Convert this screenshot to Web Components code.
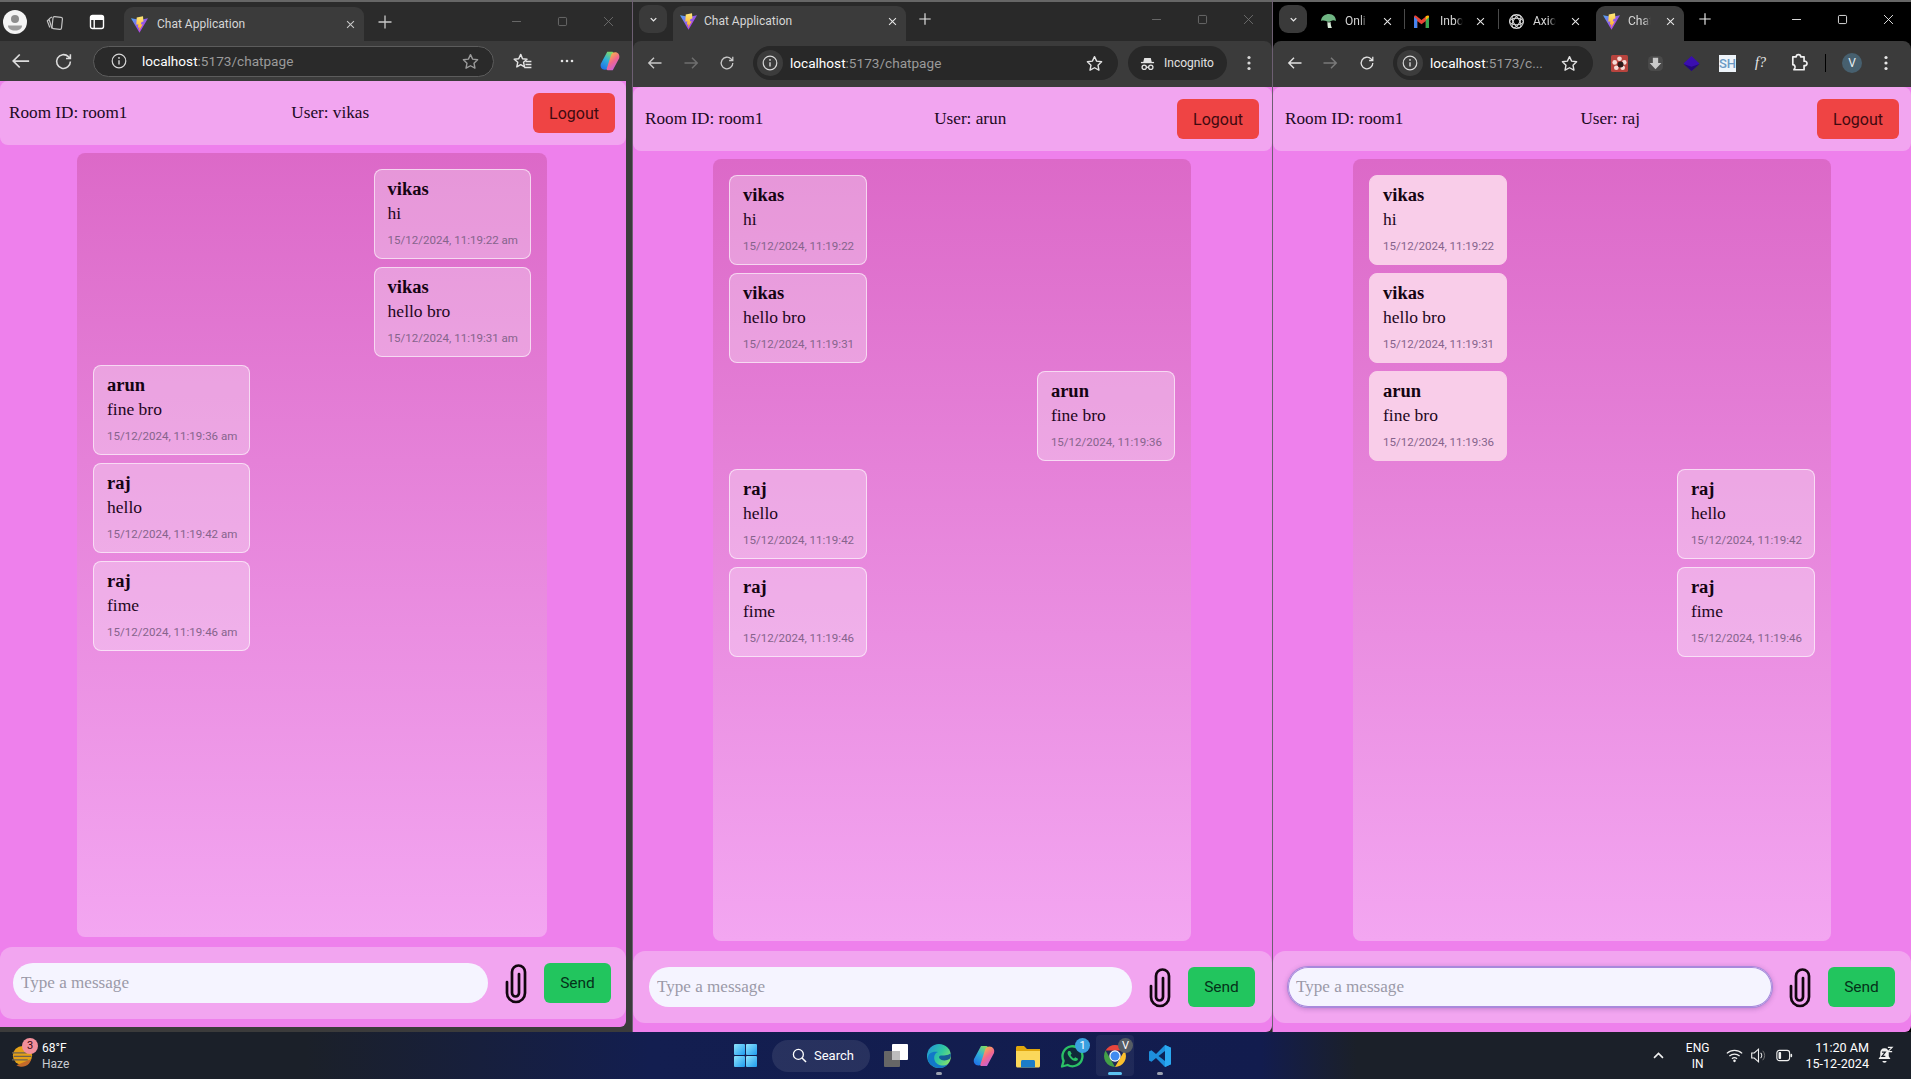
<!DOCTYPE html>
<html lang="en">
<head>
<meta charset="UTF-8">
<title>Chat Application</title>
<style>
  html, body { margin: 0; height: 100%; background: #000; overflow: hidden; }
</style>
</head>
<body>
<desk-top>
  <!-- first window: edge -->
  <browser-window kind="edge">
    <ui-icon slot="tabs" name="avatar" size="24" style="margin-left:3px"></ui-icon>
    <ui-icon slot="tabs" name="workspace" size="18" style="margin-left:19px;color:#c4c4c4"></ui-icon>
    <ui-icon slot="tabs" name="tabview" size="16" style="margin-left:25px;color:#fff"></ui-icon>
    <win-tab slot="tabs" active label="Chat Application" style="margin-left:19px;width:240px;--tab-h:34px;--tab-bg:#3b3b3b;--close:#c9c9c9;--tt:9px"></win-tab>
    <ui-icon slot="tabs" name="plus" size="16" style="margin-left:13px;color:#c9c9c9"></ui-icon>
    <win-controls slot="tabs" style="color:#6f6f6f;margin-left:auto;margin-right:1px"></win-controls>

    <ui-icon slot="tools" name="back" size="20" style="margin-left:11px;color:#dcdcdc"></ui-icon>
    <ui-icon slot="tools" name="reload" size="19" style="margin-left:23px;color:#dcdcdc"></ui-icon>
    <address-box slot="tools" host="localhost" rest=":5173/chatpage" style="margin-left:20px;width:401px;--addr-h:31px;--addr-bg:#2a2a2a;--addr-line:#5c5c5c;--star:#9b9b9b;--info-bg:transparent;--i-ml:9px;--u-ml:10px"></address-box>
    <ui-icon slot="tools" name="favs" size="19" style="margin-left:19px;color:#e4e4e4"></ui-icon>
    <ui-icon slot="tools" name="dots" size="16" style="margin-left:27px;color:#e4e4e4"></ui-icon>
    <ui-icon slot="tools" name="copilot" size="22" style="margin-left:24px"></ui-icon>

    <chat-page room="room1" user="vikas" style="--box-w:470px;--box-l:77px;--head-l:9px;--head-r:11px;--bar-l:13px;--bar-r:15px;--end:8px">
      <chat-bubble side="right"><span slot="name">vikas</span>hi<span slot="time">15/12/2024, 11:19:22 am</span></chat-bubble>
      <chat-bubble side="right"><span slot="name">vikas</span>hello bro<span slot="time">15/12/2024, 11:19:31 am</span></chat-bubble>
      <chat-bubble><span slot="name">arun</span>fine bro<span slot="time">15/12/2024, 11:19:36 am</span></chat-bubble>
      <chat-bubble><span slot="name">raj</span>hello<span slot="time">15/12/2024, 11:19:42 am</span></chat-bubble>
      <chat-bubble><span slot="name">raj</span>fime<span slot="time">15/12/2024, 11:19:46 am</span></chat-bubble>
    </chat-page>
  </browser-window>

  <!-- second window: chrome incognito -->
  <browser-window kind="chrome" style="--strip:#292929">
    <tab-search slot="tabs" style="margin-left:6px"></tab-search>
    <win-tab slot="tabs" active label="Chat Application" style="margin-left:6px;width:233px;--tab-h:35px;--tab-bg:#3b3b3b;--close:#e8e8e8;--tt:7px;--tab-low:5px"></win-tab>
    <ui-icon slot="tabs" name="plus" size="14" style="margin-left:12px;color:#e8e8e8"></ui-icon>
    <win-controls slot="tabs" style="color:#6f6f6f;margin-left:auto;margin-right:1px"></win-controls>

    <ui-icon slot="tools" name="back" size="16" style="margin-left:14px;color:#c9c9c9"></ui-icon>
    <ui-icon slot="tools" name="forward" size="16" style="margin-left:20px;color:#6f6f6f"></ui-icon>
    <ui-icon slot="tools" name="reload" size="16" style="margin-left:20px;color:#c9c9c9"></ui-icon>
    <address-box slot="tools" host="localhost" rest=":5173/chatpage" style="margin-left:18px;width:365px;--addr-h:34px;--addr-bg:#282828;--addr-line:#282828;--star:#e2e2e2;--info-bg:#3c3c3c"></address-box>
    <incognito-pill slot="tools" style="margin-left:10px"></incognito-pill>
    <ui-icon slot="tools" name="kebab" size="16" style="margin-left:14px;color:#d8d8d8"></ui-icon>

    <chat-page room="room1" user="arun" style="--box-w:478px;--box-l:80px;--head-l:12px;--head-r:13px;--bar-l:16px;--bar-r:17px;--end:9px">
      <chat-bubble><span slot="name">vikas</span>hi<span slot="time">15/12/2024, 11:19:22</span></chat-bubble>
      <chat-bubble><span slot="name">vikas</span>hello bro<span slot="time">15/12/2024, 11:19:31</span></chat-bubble>
      <chat-bubble side="right"><span slot="name">arun</span>fine bro<span slot="time">15/12/2024, 11:19:36</span></chat-bubble>
      <chat-bubble><span slot="name">raj</span>hello<span slot="time">15/12/2024, 11:19:42</span></chat-bubble>
      <chat-bubble><span slot="name">raj</span>fime<span slot="time">15/12/2024, 11:19:46</span></chat-bubble>
    </chat-page>
  </browser-window>

  <!-- third window: chrome, own profile -->
  <browser-window kind="chrome" style="--strip:#000">
    <tab-search slot="tabs" style="margin-left:6px"></tab-search>
    <win-tab slot="tabs" clipped label="Onli" icon="mushroom" style="margin-left:6px;width:88px;--tab-h:35px;--tab-bg:transparent;--close:#e8e8e8;--tab-low:5px"></win-tab>
    <i slot="tabs" style="width:1px;height:20px;margin-left:3px;background:#4a4a4a"></i>
    <win-tab slot="tabs" clipped label="Inbo" icon="gmail" style="margin-left:1px;width:88px;--tab-h:35px;--tab-bg:transparent;--close:#e8e8e8;--tab-low:5px;--tt:10px"></win-tab>
    <i slot="tabs" style="width:1px;height:20px;margin-left:4px;background:#4a4a4a"></i>
    <win-tab slot="tabs" clipped label="Axio" icon="openai" style="margin-left:2px;width:88px;--tab-h:35px;--tab-bg:transparent;--close:#e8e8e8;--tab-low:5px"></win-tab>
    <win-tab slot="tabs" clipped active label="Chat" style="margin-left:7px;width:88px;--tab-h:35px;--tab-bg:#3b3b3b;--close:#e8e8e8;--tab-low:5px"></win-tab>
    <ui-icon slot="tabs" name="plus" size="14" style="margin-left:14px;color:#f0f0f0"></ui-icon>
    <win-controls slot="tabs" style="color:#f0f0f0;margin-left:auto;margin-right:0"></win-controls>

    <ui-icon slot="tools" name="back" size="16" style="margin-left:14px;color:#e2e2e2"></ui-icon>
    <ui-icon slot="tools" name="forward" size="16" style="margin-left:19px;color:#7a7a7a"></ui-icon>
    <ui-icon slot="tools" name="reload" size="16" style="margin-left:21px;color:#e2e2e2"></ui-icon>
    <address-box slot="tools" host="localhost" rest=":5173/c..." style="margin-left:18px;width:200px;--addr-h:34px;--addr-bg:#282828;--addr-line:#282828;--star:#e2e2e2;--info-bg:#3c3c3c"></address-box>
    <ui-icon slot="tools" name="ext-red" size="17" style="margin-left:18px"></ui-icon>
    <ui-icon slot="tools" name="ext-grey" size="17" style="margin-left:19px"></ui-icon>
    <ui-icon slot="tools" name="ext-purple" size="17" style="margin-left:19px"></ui-icon>
    <ext-text slot="tools" style="margin-left:19px;background:#eef4fa;color:#6a9ac4;font:500 13px Roboto,sans-serif">SH</ext-text>
    <ext-text slot="tools" style="margin-left:16px;color:#eee;font:italic 14px 'Liberation Serif',serif">f?</ext-text>
    <ui-icon slot="tools" name="puzzle" size="18" style="margin-left:21px;color:#f0f0f0"></ui-icon>
    <i slot="tools" style="width:1px;height:18px;background:#000;margin-left:17px"></i>
    <profile-dot slot="tools" style="margin-left:16px"></profile-dot>
    <ui-icon slot="tools" name="kebab" size="16" style="margin-left:16px;color:#e8e8e8"></ui-icon>

    <chat-page room="room1" user="raj" focused style="--box-w:478px;--box-l:80px;--head-l:12px;--head-r:12px;--bar-l:15px;--bar-r:16px;--end:9px">
      <chat-bubble solid><span slot="name">vikas</span>hi<span slot="time">15/12/2024, 11:19:22</span></chat-bubble>
      <chat-bubble solid><span slot="name">vikas</span>hello bro<span slot="time">15/12/2024, 11:19:31</span></chat-bubble>
      <chat-bubble solid><span slot="name">arun</span>fine bro<span slot="time">15/12/2024, 11:19:36</span></chat-bubble>
      <chat-bubble side="right"><span slot="name">raj</span>hello<span slot="time">15/12/2024, 11:19:42</span></chat-bubble>
      <chat-bubble side="right"><span slot="name">raj</span>fime<span slot="time">15/12/2024, 11:19:46</span></chat-bubble>
    </chat-page>
  </browser-window>

  <task-bar></task-bar>
</desk-top>

<script>
  // all icons are hand drawn, fill and stroke are set per icon
  const VITE = `<defs><linearGradient id="vp" x1="0" y1="0" x2="1" y2="1"><stop offset="0" stop-color="#4fa8f5"/><stop offset=".6" stop-color="#a04be8"/><stop offset="1" stop-color="#c04be0"/></linearGradient><linearGradient id="vy" x1="0" y1="0" x2="0" y2="1"><stop offset="0" stop-color="#ffe97a"/><stop offset="1" stop-color="#ffa820"/></linearGradient></defs>
    <path d="M0 2.200 8 15.800l8-13.600-5.500 1L8 3.400 5.200 3z" fill="url(#vp)"/><path d="M11.300.2 5.400 1.300l-.4 7 1.900-.5-.4 3.200 1.500-.3-.5 3.500 3.600-6.500-1.900.4.700-2.500 1.800-.4z" fill="url(#vy)"/>`;

  const ICONS = {
    vite: [16, VITE],
    avatar: [24, `<circle cx="12" cy="12" r="12" fill="#f4f4f4"/><circle cx="12" cy="9" r="4" fill="#8d8d8d"/><path d="M5 15.500h14c0 3.500-3 5-7 5s-7-1.500-7-5z" fill="#9c9c9c"/>`],
    workspace: [18, `<g fill="none" stroke="currentColor" stroke-width="1.200"><rect x="6.500" y="4" width="9.500" height="12" rx="1.500" transform="rotate(6 11 10)"/><path d="M6 4 3.800 5.200a1.200 1.200 0 0 0-.6 1.500l2.800 8.800M2.800 6.500 1.300 8l2.500 6.500"/></g>`],
    tabview: [16, `<g fill="none" stroke="currentColor" stroke-width="1.400"><rect x="1.500" y="1.500" width="13" height="13" rx="2"/><path d="M1.500 5.200h13M5.200 5.200v9.300"/></g><path d="M2 2h12v3.200H2z" fill="currentColor"/>`],
    plus: [16, `<path d="M8 1.500v13M1.500 8h13" stroke="currentColor" stroke-width="1.300" fill="none"/>`],
    close: [16, `<path d="M3 3l10 10M13 3 3 13" stroke="currentColor" stroke-width="1.500" fill="none"/>`],
    min: [16, `<path d="M2.500 8h11" stroke="currentColor" stroke-width="1.100" fill="none"/>`],
    max: [16, `<rect x="3" y="3" width="10" height="10" rx="1.500" stroke="currentColor" stroke-width="1.100" fill="none"/>`],
    shut: [16, `<path d="M2.500 2.500l11 11M13.500 2.500l-11 11" stroke="currentColor" stroke-width="1.100" fill="none"/>`],
    back: [16, `<path d="M14.500 8H1.800M7 2.800 1.800 8 7 13.200" stroke="currentColor" stroke-width="1.400" fill="none"/>`],
    forward: [16, `<path d="M1.500 8h12.700M9 2.800 14.200 8 9 13.200" stroke="currentColor" stroke-width="1.500" fill="none"/>`],
    reload: [16, `<path d="M13.800 8a5.800 5.800 0 1 1-1.700-4.100l1.700 1.600M13.800 1.800v3.700h-3.700" stroke="currentColor" stroke-width="1.300" fill="none"/>`],
    info: [16, `<circle cx="8" cy="8" r="6.800" stroke="currentColor" stroke-width="1.200" fill="none"/><path d="M8 7.200v4.300" stroke="currentColor" stroke-width="1.400"/><circle cx="8" cy="4.900" r=".9" fill="currentColor"/>`],
    star: [16, `<path d="M8 1.500 10 5.800l4.700.6-3.400 3.200.9 4.700L8 12l-4.200 2.300.9-4.700L1.300 6.400 6 5.800z" stroke="currentColor" stroke-width="1.300" fill="none" stroke-linejoin="round"/>`],
    favs: [16, `<path d="M6.500 2 8 5.700l3.800.4-2.900 2.600.8 3.900-3.200-1.900-3.300 1.900.8-3.900L1 6.100l3.800-.4z" stroke="currentColor" stroke-width="1.200" fill="none" stroke-linejoin="round"/><path d="M10.500 8h5M10.500 10.500h5M9.500 13h6" stroke="currentColor" stroke-width="1.200"/>`],
    dots: [16, `<g fill="currentColor"><circle cx="3" cy="8" r="1.300"/><circle cx="8" cy="8" r="1.300"/><circle cx="13" cy="8" r="1.300"/></g>`],
    kebab: [16, `<g fill="currentColor"><circle cx="8" cy="2.500" r="1.600"/><circle cx="8" cy="8" r="1.600"/><circle cx="8" cy="13.500" r="1.600"/></g>`],
    chevdown: [16, `<path d="M4 6l4 4 4-4" stroke="currentColor" stroke-width="2" fill="none"/>`],
    chevup: [16, `<path d="M2.500 11 8 5.500l5.500 5.500" stroke="currentColor" stroke-width="2" fill="none"/>`],
    copilot: [24, `<defs><linearGradient id="c1" x1=".7" y1="0" x2=".2" y2="1"><stop offset="0" stop-color="#7ed868"/><stop offset=".45" stop-color="#2fb0d8"/><stop offset="1" stop-color="#1f6fe8"/></linearGradient><linearGradient id="c2" x1=".2" y1="0" x2=".8" y2="1"><stop offset="0" stop-color="#f6c83a"/><stop offset=".5" stop-color="#f2688c"/><stop offset="1" stop-color="#b85cf0"/></linearGradient></defs>
      <path d="M9 2h5.500c1 0 1.500.8 1 1.800L11 18c-.6 2-2 3.500-4.500 3.500C3 21.500 1 18.500 2 15z" fill="url(#c1)"/><path d="M15 22H9.500c-1 0-1.500-.8-1-1.800L13 6c.6-2 2-3.500 4.500-3.500 3.500 0 5.500 3 4.500 6.500z" fill="url(#c2)"/>`],
    paperclip: [22, `<path d="M2 19v11a9 9 0 0 0 18 0V9a6.500 6.500 0 0 0-13 0v21a3.500 3.500 0 0 0 7 0V11" stroke="currentColor" stroke-width="2.700" fill="none" stroke-linecap="round" transform="translate(0 -9)"/>`],
    incognito: [16, `<path d="M4.500 2h7l1 4.500h-9z" fill="currentColor"/><path d="M1 7h14" stroke="currentColor" stroke-width="1.400"/><g fill="none" stroke="currentColor" stroke-width="1.400"><circle cx="4.500" cy="12" r="2.300"/><circle cx="11.500" cy="12" r="2.300"/><path d="M6.800 12h2.400"/></g>`],
    mushroom: [16, `<path d="M1 7.500C1 3.500 5 1 8.500 1 12.500 1 15 4 15 7.500c-2-1.200-3.500-.7-5 .2-2 1-4 .3-4-.2-1.700-.5-3.500-.7-5 0z" fill="#6fb583"/><path d="M7 8.500c1 .5 2 .5 3 0 0 2 .3 4 1.200 5.500H7.500c-.5-2-.5-3.500-.5-5.500z" fill="#d8ead8"/>`],
    gmail: [16, `<path d="M1 14V3.500c0-1 1.200-1.500 2-.9L8 6.500l5-3.900c.8-.6 2-.1 2 .9V14h-3V7.500L8 10.500 4 7.500V14z" fill="#ea4335"/><path d="M1 14V3.500L4 6v8z" fill="#4285f4"/><path d="M15 14V3.500L12 6v8z" fill="#34a853"/><path d="M12 2.800 15 2.600v1.500L12 6.500z" fill="#fbbc04"/>`],
    openai: [16, `<g fill="none" stroke="#d4d4d4" stroke-width="1"><circle cx="8" cy="8" r="6.500"/><ellipse cx="8" cy="8" rx="6.500" ry="3"/><ellipse cx="8" cy="8" rx="6.500" ry="3" transform="rotate(60 8 8)"/><ellipse cx="8" cy="8" rx="6.500" ry="3" transform="rotate(120 8 8)"/></g>`],
    "ext-red": [16, `<rect width="16" height="16" rx="1.500" fill="#b8443e"/><g fill="#f6dcd8"><circle cx="8" cy="3.500" r="2.200"/><circle cx="3.500" cy="7" r="2.200"/><circle cx="12.500" cy="7" r="2.200"/><circle cx="5" cy="12" r="2.200"/><circle cx="11" cy="12" r="2.200"/></g><circle cx="9" cy="9" r="2.800" fill="#2a1a1a"/>`],
    "ext-grey": [16, `<rect x="1" y="1" width="14" height="14" rx="4" fill="#4a4a4a"/><path d="M5.500 2.500h5v5h3L8 13.500l-5.500-6h3z" fill="#c8c8c8"/>`],
    "ext-purple": [16, `<path d="M8 1l7.500 7L8 15 .5 8z" fill="#3a0eb0"/><path d="M.5 8.500 8 15l7.500-6.500L8 11z" fill="#24087a"/>`],
    puzzle: [16, `<path d="M2.500 2.500H5.500a2 2 0 1 1 4 0h3v4a2 2 0 1 1 0 3.800V14H3.500l.8-1.500c.6-1.500-.4-3-1.800-3z" stroke="currentColor" stroke-width="1.500" fill="none" stroke-linejoin="round"/>`],
    windows: [24, `<defs><linearGradient id="w" x1="0" y1="0" x2="1" y2="1"><stop offset="0" stop-color="#8fe4fb"/><stop offset="1" stop-color="#1e9cf0"/></linearGradient></defs><g fill="url(#w)"><rect x="0" y="0" width="11.500" height="11.500" rx="1"/><rect x="12.500" y="0" width="11.500" height="11.500" rx="1"/><rect x="0" y="12.500" width="11.500" height="11.500" rx="1"/><rect x="12.500" y="12.500" width="11.500" height="11.500" rx="1"/></g>`],
    search: [16, `<circle cx="6.800" cy="6.800" r="5.300" stroke="#fff" stroke-width="1.400" fill="none"/><path d="M10.700 10.700 15 15" stroke="#fff" stroke-width="1.600"/>`],
    taskview: [24, `<rect y="7" width="16" height="16" rx="1" fill="#666"/><rect x="8" y="0" width="16" height="16" rx="1" fill="#fff"/><rect x="8" y="7" width="8" height="9" fill="#bdbdbd"/>`],
    edge: [24, `<defs><linearGradient id="e1" x1="0" y1="0" x2="1" y2=".6"><stop offset="0" stop-color="#1f8fe0"/><stop offset=".6" stop-color="#30c8a0"/><stop offset="1" stop-color="#7ee070"/></linearGradient><linearGradient id="e2" x1="0" y1="0" x2="1" y2="1"><stop offset="0" stop-color="#0c59a4"/><stop offset="1" stop-color="#114a8b"/></linearGradient></defs>
      <circle cx="12" cy="12" r="12" fill="url(#e1)"/><path d="M1 16C0 8 7 7 11 8c-3 1-4.500 4-3.500 8 1 4 6 6 9.500 5.500 2-.3 3.500-1 4.500-2C19 23 15 24.500 11.500 24 6 23.500 2 20 1 16z" fill="#1278c8"/><path d="M22.500 15c-3 2-8 2-10-.5-1-1.300-.3-3 1.500-3 4 0 8.500-.5 9.500-2.500.8 2 .8 4-1 6z" fill="url(#e2)" opacity=".9"/>`],
    folder: [24, `<path d="M0 3.500C0 2.500.8 2 1.500 2H8l3 3h13v3H0z" fill="#e0a60c"/><path d="M0 7h24v15c0 .8-.6 1.500-1.500 1.500h-21C.6 23.500 0 22.800 0 22z" fill="#fbd85a"/><path d="M5 17.500c0-.8.700-1.500 1.500-1.500h11c.8 0 1.500.7 1.500 1.500v6H5z" fill="#1b7cc8"/>`],
    whatsapp: [24, `<path d="M2 22.500l1.600-5.600A10 10 0 1 1 7.600 21z" fill="#102a3a" stroke="#2bc266" stroke-width="2.300" stroke-linejoin="round"/><path d="M8.500 7c-1.300 1-1.300 3 .5 5.500 2 3 4.500 4.500 6.500 4.500 1.300 0 2.500-1 2.500-2.300l-2.800-1.500-1.200 1.300c-1.500-.5-3-2.200-3.500-3.500l1.200-1.200L10.200 7z" fill="#2bc266"/>`],
    chrome: [24, `<path d="M2.500 6.500A11 11 0 0 1 21.500 6.500H12z" fill="#e8453c"/><path d="M21.500 6.500A11 11 0 0 1 12 23l4.800-8.300z" fill="#fbc02d"/><path d="M12 23A11 11 0 0 1 2.500 6.500L7.300 14.800z" fill="#43a047"/><circle cx="12" cy="12" r="5.700" fill="#fff"/><circle cx="12" cy="12" r="4.500" fill="#3f8bf0"/>`],
    vscode: [24, `<path d="M17 1 8 10 3.500 6.300 1 7.500v9l2.500 1.200L8 14l9 9 6-2.700V3.700z" fill="#1d8fdc"/><path d="M17 7 10.500 12 17 17z" fill="#0c2356"/><path d="M17 1l6 2.700v16.600L17 23z" fill="#2aa8f0"/>`],
    wifi: [20, `<g fill="none" stroke="#f0f0f0" stroke-width="1.500"><path d="M1 7.500a13 13 0 0 1 18 0"/><path d="M4 10.700a9 9 0 0 1 12 0"/><path d="M7 13.700a4.600 4.600 0 0 1 6 0"/></g><circle cx="10" cy="16.300" r="1.500" fill="#f0f0f0"/>`],
    speaker: [20, `<path d="M2 7h3l5-4.500v15L5 13H2z" stroke="#f0f0f0" stroke-width="1.300" fill="none"/><path d="M12.500 7a4 4 0 0 1 0 6" stroke="#f0f0f0" stroke-width="1.200" fill="none"/><path d="M15 4.500a8 8 0 0 1 0 11" stroke="#777" stroke-width="1.100" fill="none"/>`],
    battery: [20, `<rect x="1" y="4" width="15" height="12" rx="3" stroke="#f0f0f0" stroke-width="1.300" fill="none"/><rect x="3" y="6" width="3" height="8" rx="1" fill="#f0f0f0"/><rect x="17" y="8" width="2" height="4" rx="1" fill="#f0f0f0"/>`],
    bell: [20, `<path d="M10 1.500c3.500 0 5 2.500 5 5.500v4l2 3H3l2-3V7c0-3 1.500-5.500 5-5.500z" fill="#f2f2f2"/><path d="M7.500 16.500h5a2.500 2 0 0 1-5 0z" fill="#f2f2f2"/><path d="M7 6h4l-4 5h4" stroke="#1b2029" stroke-width="1.400" fill="none"/><path d="M14 .5h5l-5 5h5" stroke="#f2f2f2" stroke-width="1.300" fill="none"/>`],
    weather: [24, `<circle cx="12" cy="12" r="11" fill="#e4a018"/><path d="M5 23a11 11 0 0 0 17-7z" fill="#c46a2a"/><path d="M0 9h17M2 13h20M0 17h18" stroke="#6c6252" stroke-width="1.500"/>`]
  };

  class UiIcon extends HTMLElement {
    connectedCallback() {
      const [box, body] = ICONS[this.getAttribute("name")];
      const size = this.getAttribute("size") || 16;
      const root = this.shadowRoot || this.attachShadow({ mode: "open" });
      root.innerHTML = `
        <style>
          :host { display: inline-flex; flex: none; width: ${size}px; height: ${size}px; }
          svg { width: 100%; height: 100%; display: block; overflow: visible; }
        </style>
        <svg viewBox="0 0 ${box} ${box}">${body}</svg>`;
    }
  }
  customElements.define("ui-icon", UiIcon);

  class DeskTop extends HTMLElement {
    constructor() {
      super();
      this.attachShadow({ mode: "open" });
      this.shadowRoot.innerHTML = `
        <style>
          :host {
            display: grid;
            grid-template-columns: 632px 640px 639px;
            grid-template-rows: 1032px 47px;
            width: 1911px;
            height: 1079px;
          }
          ::slotted(task-bar) { grid-column: 1 / 4; }
        </style>
        <slot></slot>`;
    }
  }
  customElements.define("desk-top", DeskTop);

  class BrowserWindow extends HTMLElement {
    constructor() {
      super();
      this.attachShadow({ mode: "open" });
      this.shadowRoot.innerHTML = `
        <style>
          :host { display: flex; flex-direction: column; min-width: 0; overflow: hidden; background: #3b3b3b; }
          :host([kind=chrome]) { border-left: 1px solid #6d5f72; background: var(--strip); }
          .tabs {
            flex: none; display: flex; align-items: center; height: 39px;
            border-top: 2px solid #666; background: var(--strip, #2b2b2b);
          }
          :host([kind=chrome]) .tabs { height: 34px; padding-bottom: 5px; }
          .tools { flex: none; display: flex; align-items: center; height: 40px; background: #3b3b3b; }
          :host([kind=chrome]) .tools { height: 44px; padding-bottom: 2px; border-radius: 8px 8px 0 0; }
          .page { flex: 1; min-height: 0; display: flex; }
          :host([kind=edge]) .page { padding: 0 6px 5px 0; background: #3b3b3b; }
        </style>
        <div class="tabs"><slot name="tabs"></slot></div>
        <div class="tools"><slot name="tools"></slot></div>
        <div class="page"><slot></slot></div>`;
    }
  }
  customElements.define("browser-window", BrowserWindow);

  class WinTab extends HTMLElement {
    connectedCallback() {
      const label = this.getAttribute("label");
      const icon = this.getAttribute("icon") || "vite";
      this.attachShadow({ mode: "open" });
      this.shadowRoot.innerHTML = `
        <style>
          :host {
            display: flex; flex: none; align-items: center; align-self: flex-end;
            box-sizing: border-box; height: var(--tab-h); margin-bottom: calc(var(--tab-low, 0px) * -1);
            padding: 0 8px var(--tab-low, 0px) 7px;
            background: var(--tab-bg); border-radius: 9px 9px 0 0;
            font: 12px Roboto, sans-serif; color: #d6d6d6;
          }
          span { flex: 1; min-width: 0; margin-left: var(--tt, 8px); white-space: nowrap; overflow: hidden; }
          :host([clipped]) span {
            flex: none; width: 24px; margin-right: auto;
            -webkit-mask-image: linear-gradient(90deg, #000 65%, transparent 95%);
            mask-image: linear-gradient(90deg, #000 65%, transparent 95%);
          }
          ui-icon { color: var(--close); }
        </style>
        <ui-icon name="${icon}" size="17"></ui-icon>
        <span>${label}</span>
        <ui-icon name="close" size="11"></ui-icon>`;
    }
  }
  customElements.define("win-tab", WinTab);

  class WinControls extends HTMLElement {
    constructor() {
      super();
      this.attachShadow({ mode: "open" });
      this.shadowRoot.innerHTML = `
        <style>
          :host { display: flex; flex: none; }
          div { width: 46px; display: flex; justify-content: center; }
        </style>
        <div><ui-icon name="min" size="13"></ui-icon></div>
        <div><ui-icon name="max" size="13"></ui-icon></div>
        <div><ui-icon name="shut" size="13"></ui-icon></div>`;
    }
  }
  customElements.define("win-controls", WinControls);

  class TabSearch extends HTMLElement {
    constructor() {
      super();
      this.attachShadow({ mode: "open" });
      this.shadowRoot.innerHTML = `
        <style>
          :host {
            display: flex; flex: none; align-items: center; justify-content: center;
            width: 28px; height: 28px; border-radius: 9px; background: #3a3a3a; color: #e8e8e8;
          }
        </style>
        <ui-icon name="chevdown" size="11"></ui-icon>`;
    }
  }
  customElements.define("tab-search", TabSearch);

  class AddressBox extends HTMLElement {
    connectedCallback() {
      this.attachShadow({ mode: "open" });
      this.shadowRoot.innerHTML = `
        <style>
          :host {
            display: flex; flex: none; align-items: center; box-sizing: border-box;
            height: var(--addr-h); padding: 0 14px 0 3px;
            background: var(--addr-bg); border: 1px solid var(--addr-line);
            border-radius: 17px; font: 13.6px Roboto, sans-serif; color: #e6e6e6;
          }
          .i {
            display: flex; align-items: center; justify-content: center; flex: none;
            width: 26px; height: 26px; margin-left: var(--i-ml, 0px); border-radius: 50%;
            background: var(--info-bg); color: #d8d8d8;
          }
          .url { margin-left: var(--u-ml, 7px); flex: 1; white-space: nowrap; }
          .url b { font-weight: 400; color: #fff; }
          .url span { color: #9a9a9a; }
          .star { color: var(--star); }
        </style>
        <div class="i"><ui-icon name="info" size="16"></ui-icon></div>
        <div class="url"><b>${this.getAttribute("host")}</b><span>${this.getAttribute("rest")}</span></div>
        <ui-icon class="star" name="star" size="17"></ui-icon>`;
    }
  }
  customElements.define("address-box", AddressBox);

  class IncognitoPill extends HTMLElement {
    constructor() {
      super();
      this.attachShadow({ mode: "open" });
      this.shadowRoot.innerHTML = `
        <style>
          :host {
            display: flex; flex: none; align-items: center; gap: 9px; box-sizing: border-box;
            width: 99px; height: 34px; padding-left: 12px; border-radius: 17px;
            background: #282828; color: #e2e2e2; font: 12px Roboto, sans-serif;
          }
        </style>
        <ui-icon name="incognito" size="15"></ui-icon><span>Incognito</span>`;
    }
  }
  customElements.define("incognito-pill", IncognitoPill);

  class ExtText extends HTMLElement {
    constructor() {
      super();
      this.attachShadow({ mode: "open" });
      this.shadowRoot.innerHTML = `
        <style>
          :host { display: flex; flex: none; align-items: center; justify-content: center; width: 17px; height: 17px; }
        </style>
        <slot></slot>`;
    }
  }
  customElements.define("ext-text", ExtText);

  class ProfileDot extends HTMLElement {
    constructor() {
      super();
      this.attachShadow({ mode: "open" });
      this.shadowRoot.innerHTML = `
        <style>
          :host {
            display: flex; flex: none; align-items: center; justify-content: center;
            width: 20px; height: 20px; border-radius: 50%; background: #47606f;
            color: #e8eef2; font: 12px Roboto, sans-serif;
          }
        </style>V`;
    }
  }
  customElements.define("profile-dot", ProfileDot);

  class ChatPage extends HTMLElement {
    connectedCallback() {
      this.attachShadow({ mode: "open" });
      this.shadowRoot.innerHTML = `
        <style>
          :host {
            flex: 1; min-width: 0; display: flex; flex-direction: column; box-sizing: border-box;
            padding-bottom: var(--end); background: #ee80ec; border-radius: 0 0 6px 0;
            font: 17.2px "Liberation Serif", serif; color: #21091f;
          }
          header {
            flex: none; display: flex; align-items: center; justify-content: space-between;
            height: 64px; box-sizing: border-box; padding: 0 var(--head-r) 0 var(--head-l);
            background: #f2a5f0; border-radius: 8px;
          }
          button {
            border: 0; border-radius: 6px; width: 82px; height: 40px; padding: 0;
            background: #ef4444; color: #3f0a10; font: 16px Roboto, sans-serif;
          }
          .box {
            flex: 1; min-height: 0; box-sizing: border-box; width: var(--box-w); margin: 8px 0 10px var(--box-l);
            padding: 16px; display: flex; flex-direction: column; gap: 8px; border-radius: 8px;
            background: linear-gradient(#dc69c8, #f3a6f1);
          }
          .bar {
            flex: none; display: flex; align-items: center; gap: 17px; height: 72px; box-sizing: border-box;
            padding: 0 var(--bar-r) 0 var(--bar-l); background: #f2a5f0; border-radius: 12px;
          }
          input {
            flex: 1; min-width: 0; height: 40px; box-sizing: border-box; padding: 0 8px; border: 0;
            border-radius: 20px; background: #f5f4ff; outline: 0; font: 17.1px "Liberation Serif", serif;
          }
          input::placeholder { color: #9b9aa8; opacity: 1; }
          :host([focused]) input {
            box-shadow: inset 0 0 0 1px #a989dc, 0 0 0 1px #a989dc, 0 1px 5px 1px rgba(80, 40, 120, .3);
          }
          .clip { color: #12060f; }
          .send { width: 67px; background: #22c55e; color: #05321a; font-size: 15.5px; }
        </style>
        <header>
          <span>Room ID: ${this.getAttribute("room")}</span>
          <span>User: ${this.getAttribute("user")}</span>
          <button>Logout</button>
        </header>
        <div class="box"><slot></slot></div>
        <div class="bar">
          <input placeholder="Type a message">
          <ui-icon class="clip" name="paperclip" size="22"></ui-icon>
          <button class="send">Send</button>
        </div>`;
    }
  }
  customElements.define("chat-page", ChatPage);

  class ChatBubble extends HTMLElement {
    constructor() {
      super();
      this.attachShadow({ mode: "open" });
      this.shadowRoot.innerHTML = `
        <style>
          :host { display: block; flex: none; align-self: flex-start; }
          :host([side=right]) { align-self: flex-end; }
          .b {
            box-sizing: border-box; height: 90px; padding: 7px 12px 7px 13px;
            background: rgba(255, 255, 255, .3); border: 1px solid rgba(255, 255, 255, .6);
            border-radius: 8px; font: 17.5px/24px "Liberation Serif", serif; color: #1e061c;
          }
          :host([solid]) .b { background: #f9cde9; border-color: #f9cde9; }
          .name { font-weight: 700; font-size: 18.5px; color: #140412; }
          .time { margin-top: 7px; font: 11.55px/16px Roboto, sans-serif; color: #86648c; white-space: nowrap; }
        </style>
        <div class="b">
          <div class="name"><slot name="name"></slot></div>
          <div><slot></slot></div>
          <div class="time"><slot name="time"></slot></div>
        </div>`;
    }
  }
  customElements.define("chat-bubble", ChatBubble);

  class TaskItem extends HTMLElement {
    connectedCallback() {
      const gap = this.getAttribute("gap") || 0;
      const mark = this.getAttribute("mark");
      const badge = this.getAttribute("badge");
      this.attachShadow({ mode: "open" });
      this.shadowRoot.innerHTML = `
        <style>
          :host { position: relative; display: flex; flex: none; margin-left: ${gap}px; }
          .mark { position: absolute; left: 50%; top: 28px; width: 6px; height: 3px; margin-left: -3px; border-radius: 2px; background: #9aa0b0; }
          .mark.on { width: 14px; margin-left: -7px; background: #5cc2f2; }
          .badge {
            position: absolute; right: -6px; top: -6px; width: 15px; height: 15px; border-radius: 50%;
            display: flex; align-items: center; justify-content: center;
            font: 11px Roboto, sans-serif; color: #fff; background: var(--badge, #3aa0e0);
          }
          .hover { position: absolute; inset: -9px -7px -8px -7px; background: rgba(255,255,255,.06); border-radius: 4px; }
        </style>
        ${this.hasAttribute("hover") ? '<div class="hover"></div>' : ""}
        <ui-icon name="${this.getAttribute("name")}" size="${this.getAttribute("size") || 24}" style="position:relative"></ui-icon>
        ${mark ? `<div class="mark ${mark === "on" ? "on" : ""}"></div>` : ""}
        ${badge ? `<div class="badge">${badge}</div>` : ""}`;
    }
  }
  customElements.define("task-item", TaskItem);

  class TaskBar extends HTMLElement {
    constructor() {
      super();
      this.attachShadow({ mode: "open" });
      this.shadowRoot.innerHTML = `
        <style>
          :host {
            display: flex; align-items: center; height: 47px; color: #fff;
            font: 12px/16px Roboto, sans-serif;
            background: linear-gradient(90deg, #1b2029 0, #1b2029 16%, #131e50 34%, #121c4e 66%, #1b2029 71%, #1b2029 100%);
          }
          .left { flex: none; width: 734px; display: flex; align-items: center; box-sizing: border-box; padding-left: 12px; }
          .weather { position: relative; display: flex; width: 21px; height: 21px; }
          .weather b {
            position: absolute; right: -5px; top: -7px; width: 16px; height: 16px; border-radius: 50%;
            background: #f28f9b; color: #3a0a10; font: 11px/16px Roboto, sans-serif; text-align: center;
          }
          .temp { margin-left: 9px; }
          .temp div + div { color: #c9ccd2; }
          .center { flex: none; display: flex; align-items: center; }
          .find {
            display: flex; align-items: center; gap: 7px; margin-left: 15px; width: 98px; height: 32px;
            box-sizing: border-box; padding-left: 20px; border-radius: 16px;
            background: rgba(255, 255, 255, .09); font-size: 13px;
          }
          .right { margin-left: auto; display: flex; align-items: center; padding-right: 18px; }
          .lang { margin-left: 21px; text-align: center; }
          .clock { margin-left: 12px; text-align: right; font-size: 12.6px; }
          .right ui-icon { color: #f0f0f0; }
        </style>
        <div class="left">
          <div class="weather"><ui-icon name="weather" size="21"></ui-icon><b>3</b></div>
          <div class="temp"><div>68°F</div><div>Haze</div></div>
        </div>
        <div class="center">
          <ui-icon name="windows" size="23"></ui-icon>
          <div class="find"><ui-icon name="search" size="15"></ui-icon><span>Search</span></div>
          <task-item gap="14" name="taskview"></task-item>
          <task-item gap="19" name="edge" mark="dot"></task-item>
          <task-item gap="21" name="copilot"></task-item>
          <task-item gap="20" name="folder"></task-item>
          <task-item gap="20" name="whatsapp" badge="1"></task-item>
          <task-item gap="19" name="chrome" mark="on" badge="V" hover style="--badge:#555c64"></task-item>
          <task-item gap="21" name="vscode" mark="dot"></task-item>
        </div>
        <div class="right">
          <ui-icon name="chevup" size="13"></ui-icon>
          <div class="lang"><div>ENG</div><div>IN</div></div>
          <ui-icon name="wifi" size="17" style="margin-left:17px"></ui-icon>
          <ui-icon name="speaker" size="17" style="margin-left:7px"></ui-icon>
          <ui-icon name="battery" size="17" style="margin-left:9px"></ui-icon>
          <div class="clock"><div>11:20 AM</div><div>15-12-2024</div></div>
          <ui-icon name="bell" size="17" style="margin-left:7px"></ui-icon>
        </div>`;
    }
  }
  customElements.define("task-bar", TaskBar);
</script>
</body>
</html>
